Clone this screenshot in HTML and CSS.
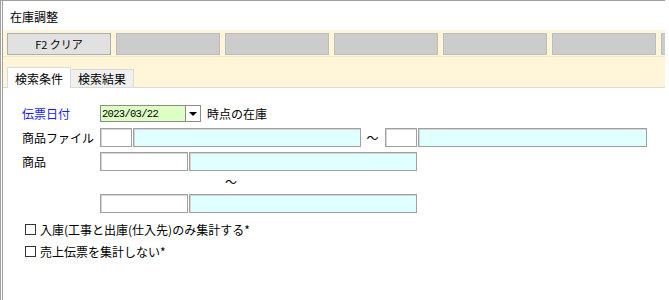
FILE: index.html
```html
<!DOCTYPE html>
<html lang="ja">
<head>
    <meta charset="UTF-8">
    <title>在庫調整</title>
    <link rel="stylesheet" href="styles.css">
</head>
<body>
    <div class="window">
        <div class="title">在庫調整</div>

        <div class="toolbar">
            <button class="fkey active">F2 クリア</button>
            <button class="fkey"></button>
            <button class="fkey"></button>
            <button class="fkey"></button>
            <button class="fkey"></button>
            <button class="fkey"></button>
            <button class="fkey"></button>
        </div>

        <div class="tabbar">
            <div class="tab selected">検索条件</div>
            <div class="tab">検索結果</div>
        </div>

        <div class="content">
            <div class="row row-date">
                <label class="label blue">伝票日付</label>
                <div class="datebox">
                    <span class="date">2023/03/22</span>
                    <span class="drop"><span class="arrow"></span></span>
                </div>
                <span class="note">時点の在庫</span>
            </div>

            <div class="row">
                <label class="label">商品ファイル</label>
                <span class="field w32"></span>
                <span class="field cyan w228"></span>
                <span class="tilde">～</span>
                <span class="field w32"></span>
                <span class="field cyan w229"></span>
            </div>

            <div class="row">
                <label class="label">商品</label>
                <span class="field w88"></span>
                <span class="field cyan w228"></span>
            </div>

            <div class="range-sep">～</div>

            <div class="row">
                <label class="label"></label>
                <span class="field w88"></span>
                <span class="field cyan w228"></span>
            </div>

            <div class="checks">
                <label class="check"><span class="box"></span>入庫(工事と出庫(仕入先)のみ集計する*</label>
                <label class="check"><span class="box"></span>売上伝票を集計しない*</label>
            </div>
        </div>
    </div>
</body>
</html>
```

FILE: styles.css
```css
body {
    margin: 0;
    background: #ffffff;
    font-family: "Noto Sans CJK JP", "Liberation Sans", sans-serif;
    font-size: 12px;
    color: #000;
}
.window {
    width: 662px;
    height: 299px;
    border-top: 1px solid #a0a0a0;
    border-left: 3px double #a0a0a0;
    overflow: hidden;
}
.title {
    height: 29px;
    line-height: 31px;
    padding-left: 7px;
}
.toolbar {
    display: flex;
    gap: 5px;
    background: #fff6da;
    padding: 3px 0 1px 4px;
    border-bottom: 1px solid #f3e9c6;
    overflow: hidden;
}
.fkey {
    flex: 0 0 104px;
    height: 22px;
    background: #cccccc;
    border: 1px solid #bdbdbd;
    font-family: inherit;
    font-size: 11px;
    padding: 0;
}
.fkey.active {
    background: #e1e1e1;
    border-color: #adadad;
}
.tabbar {
    display: flex;
    align-items: flex-end;
    height: 30px;
    background: #fff6da;
    padding-left: 4px;
    border-bottom: 1px solid #d9d9d9;
}
.tab {
    height: 17px;
    line-height: 17px;
    padding: 0 7px;
    background: #f0f0f0;
    border: 1px solid #d9d9d9;
    border-bottom: none;
    border-left: none;
}
.tab.selected {
    height: 20px;
    line-height: 22px;
    background: #ffffff;
    border-left: 1px solid #d9d9d9;
    margin-bottom: -1px;
}
.content {
    padding-top: 17px;
}
.row {
    display: flex;
    align-items: center;
    height: 19px;
    margin-bottom: 5px;
}
.row-date {
    height: 17px;
    margin-bottom: 6px;
}
.label {
    width: 78px;
    padding-left: 19px;
    flex-shrink: 0;
}
.blue {
    color: #1a1aff;
}
.datebox {
    display: flex;
    height: 17px;
}
.date {
    width: 85px;
    background: #ddffc4;
    border: 1px solid #8c8c8c;
    border-right: none;
    font-family: "Liberation Mono", monospace;
    font-size: 10.5px;
    letter-spacing: -0.7px;
    line-height: 16px;
    padding-left: 1px;
    box-sizing: border-box;
}
.drop {
    width: 16px;
    border: 1px solid #8c8c8c;
    box-sizing: border-box;
    background: #fff;
    display: flex;
    align-items: center;
    justify-content: center;
}
.arrow {
    border-left: 4px solid transparent;
    border-right: 4px solid transparent;
    border-top: 4px solid #000;
}
.note {
    margin-left: 6px;
}
.field {
    height: 19px;
    box-sizing: border-box;
    border: 1px solid #a0a0a0;
    box-shadow: inset 1px 1px 0 #d4d4d4;
    background: #ffffff;
    margin-right: 1px;
}
.field.cyan {
    background: #e0ffff;
}
.w32 { width: 32px; }
.w88 { width: 88px; }
.w228 { width: 228px; }
.w229 { width: 229px; }
.tilde {
    width: 23px;
    text-align: center;
    margin-left: -1px;
    margin-right: 1px;
}
.range-sep {
    height: 18px;
    line-height: 22px;
    padding-left: 222px;
    margin-top: -5px;
    margin-bottom: 5px;
}
.checks {
    display: flex;
    flex-direction: column;
    gap: 8px;
    padding-left: 22px;
    margin-top: 9px;
}
.check {
    display: flex;
    align-items: center;
    height: 14px;
}
.box {
    width: 11px;
    height: 11px;
    border: 1px solid #333;
    box-sizing: border-box;
    margin-right: 4px;
}
```
